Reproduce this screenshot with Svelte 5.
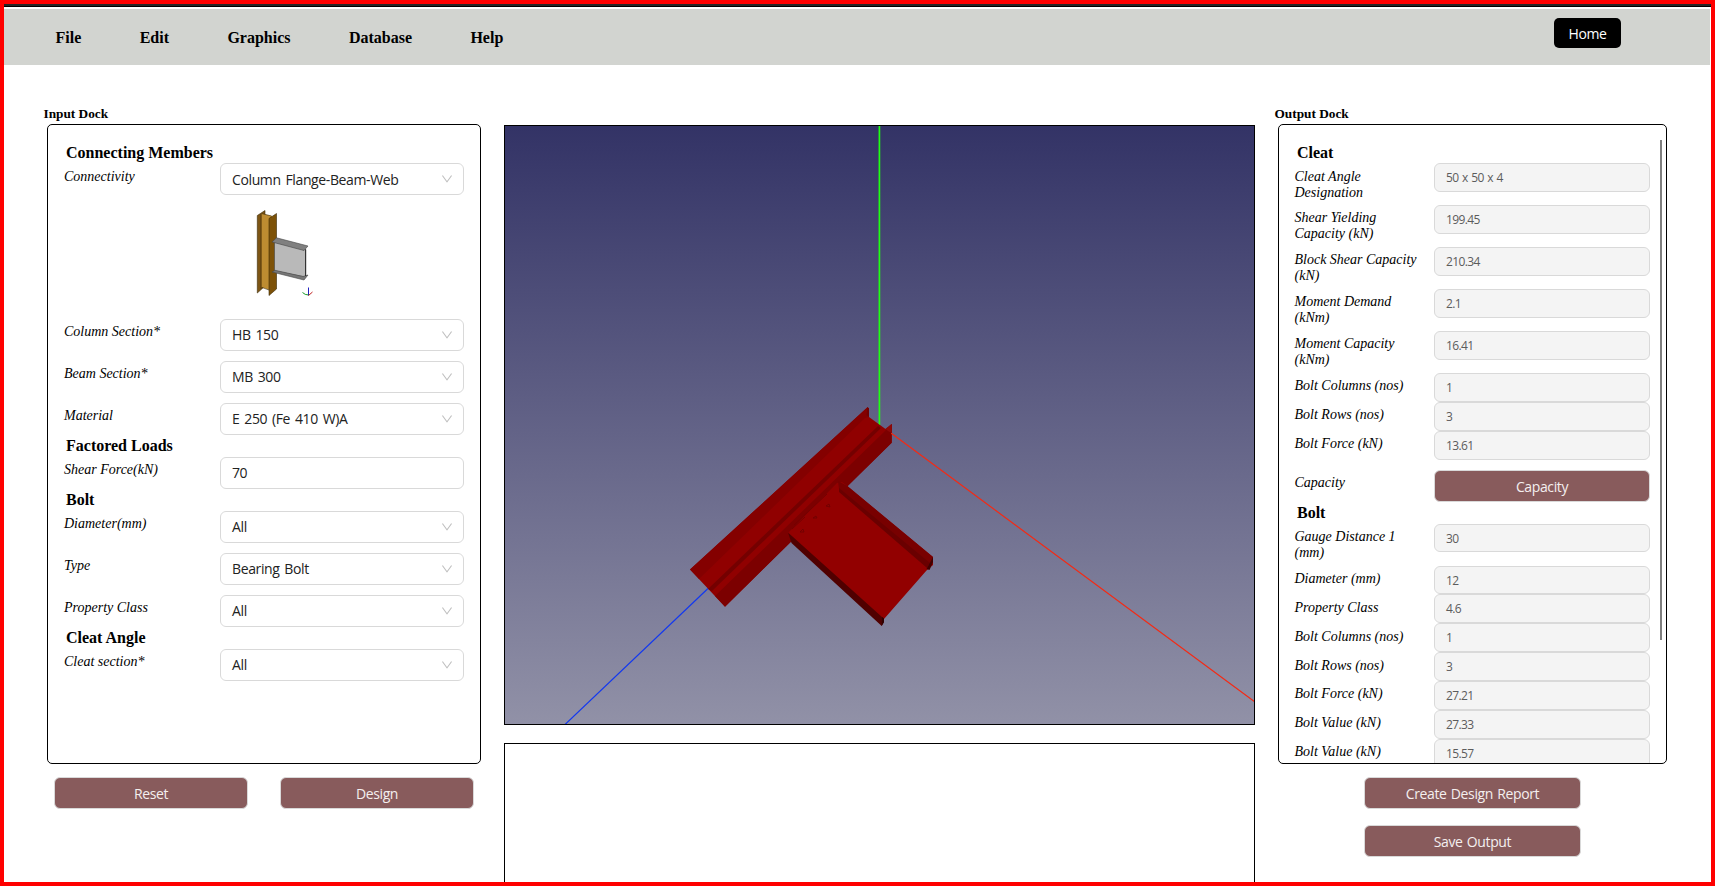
<script>
  const menu = ['File', 'Edit', 'Graphics', 'Database', 'Help'];

  const inputs = [
    { title: 'Connecting Members' },
    { label: 'Connectivity', value: 'Column Flange-Beam-Web', select: true, first: true },
    { picture: true },
    { label: 'Column Section*', value: 'HB 150', select: true },
    { label: 'Beam Section*', value: 'MB 300', select: true },
    { label: 'Material', value: 'E 250 (Fe 410 W)A', select: true },
    { title: 'Factored Loads' },
    { label: 'Shear Force(kN)', value: '70' },
    { title: 'Bolt' },
    { label: 'Diameter(mm)', value: 'All', select: true },
    { label: 'Type', value: 'Bearing Bolt', select: true },
    { label: 'Property Class', value: 'All', select: true },
    { title: 'Cleat Angle' },
    { label: 'Cleat section*', value: 'All', select: true }
  ];

  const outputs = [
    { title: 'Cleat' },
    { label: 'Cleat Angle Designation', value: '50 x 50 x 4', tall: true },
    { label: 'Shear Yielding Capacity (kN)', value: '199.45', tall: true },
    { label: 'Block Shear Capacity (kN)', value: '210.34', tall: true },
    { label: 'Moment Demand (kNm)', value: '2.1', tall: true },
    { label: 'Moment Capacity (kNm)', value: '16.41', tall: true },
    { label: 'Bolt Columns (nos)', value: '1' },
    { label: 'Bolt Rows (nos)', value: '3' },
    { label: 'Bolt Force (kN)', value: '13.61' },
    { label: 'Capacity', action: 'Capacity' },
    { title: 'Bolt' },
    { label: 'Gauge Distance 1 (mm)', value: '30', tall: true },
    { label: 'Diameter (mm)', value: '12' },
    { label: 'Property Class', value: '4.6' },
    { label: 'Bolt Columns (nos)', value: '1' },
    { label: 'Bolt Rows (nos)', value: '3' },
    { label: 'Bolt Force (kN)', value: '27.21' },
    { label: 'Bolt Value (kN)', value: '27.33' },
    { label: 'Bolt Value (kN)', value: '15.57' }
  ];
</script>

<div class="page">
  <div class="strip"></div>
  <header>
    <nav>
      {#each menu as item}<span>{item}</span>{/each}
    </nav>
    <button class="home">Home</button>
  </header>

  <main>
    <section class="left">
      <h2>Input Dock</h2>
      <div class="panel">
        {#each inputs as item}
          {#if item.title}
            <h3>{item.title}</h3>
          {:else if item.picture}
            <div class="picture">
              <svg width="90" height="114" viewBox="0 0 90 114">
                <g stroke="#3a2a08" stroke-width=".6" stroke-linejoin="round">
                  <path d="M17.3 20.5 25 15.500V91L17.300 98Z" fill="#7d5514" />
                  <path d="M21.500 18.500 32 21V96L21.500 92Z" fill="#bd8c31" stroke="none" />
                  <path d="M21.500 18.500 31.500 21" />
                  <path d="M21 19V94" />
                  <path d="M29 23.500 36.500 18.500V94L29 100.500Z" fill="#7d5208" />
                  <path d="M22 92.500 29 95" fill="none" />
                </g>
                <g stroke="#444" stroke-width=".6" stroke-linejoin="round">
                  <path d="M34.500 47 65.500 54V82L34.500 76Z" fill="#b9b9b9" />
                  <path d="M32 47 36.500 42.800 68 51 64 55.500Z" fill="#808080" />
                  <path d="M32 77 35 75.300 63 81.500 68 80 64 85Z" fill="#777" />
                  <path d="M65.700 54.500V81" stroke="#222" stroke-width="1" />
                </g>
                <path d="M68.500 100.500V92.500" stroke="#2020c0" />
                <path d="M68.500 100 Q65 100 62.500 97.500" stroke="#159a28" />
                <path d="M68.500 100.500 72.500 97" stroke="#c02020" />
              </svg>
            </div>
          {:else}
            <div class="row">
              <label>{item.label}</label>
              <div class="field" class:first={item.first}>
                <span>{item.value}</span>
                {#if item.select}
                  <svg width="12" height="12" viewBox="64 64 896 896" fill="#bfbfbf">
                    <path d="M884 256h-75c-5.100 0-9.900 2.500-12.900 6.600L512 654.200 227.900 262.600c-3-4.100-7.800-6.600-12.900-6.600h-75c-6.500 0-10.300 7.400-6.500 12.700l352.600 486.100c12.800 17.600 39 17.600 51.700 0l352.600-486.100c3.900-5.300.1-12.700-6.400-12.700z" />
                  </svg>
                {/if}
              </div>
            </div>
          {/if}
        {/each}
      </div>
      <div class="actions">
        <button>Reset</button>
        <button>Design</button>
      </div>
    </section>

    <section class="center">
      <div class="viewer">
        <svg width="749" height="598" viewBox="505 126 749 598">
          <path d="M879.400 126V425" stroke="#20ff12" stroke-width="1.700" />
          <path d="M708.500 588 564.500 725" stroke="#1238f0" stroke-width="1.200" />
          <path d="M690 569.500 867.500 407.300 869 408.500V417L885.500 429 891.700 424V442.700L725 606.700Z" fill="#900000" />
          <path d="M690 569.500 867.500 407.300 869 408.500V417L865 418 699 579Z" fill="#840000" />
          <path d="M715 596 884 432 891.700 424V442.700L725 606.700Z" fill="#7c0000" />
          <path d="M708 589 878 426 881 428 712 591Z" fill="#740000" />
          <path d="M867.500 407.300 869 408.500V417L866.500 415Z" fill="#720000" />
          <path d="M885.500 429 891.700 424V433L888 431Z" fill="#8e0909" />
          <path d="M880 425 1255 702" stroke="#f42a14" stroke-width="1.200" stroke-dasharray="0 14 500" />
          <path d="M788 533 837 483 842 482 847.300 486 933 557V565L926.500 570.500 884 619 880 622Z" fill="#920000" />
          <path d="M838 481 847.300 486 933 557 930 564 839 489Z" fill="#780000" />
          <path d="M839 488 930 563 927 568 839 492Z" fill="#6a0000" />
          <path d="M933 557V562L929.500 570 926.500 569Z" fill="#420000" />
          <path d="M788 532.500 882 617 884 618.500V622L881.700 626 791.500 543Z" fill="#500000" />
          <path d="M882 617 884 618.500V622L881.700 626Z" fill="#300000" />
          <path d="M794 525 827 494M792 529 805 517" stroke="#750000" stroke-width="1" />
          <path d="M826 506 829 504 830 507ZM813 518 816 516 817 518ZM800 532 803 529 804 532Z" fill="none" stroke="#6d0000" stroke-width=".8" />
        </svg>
      </div>
      <div class="log"></div>
    </section>

    <section class="right">
      <h2>Output Dock</h2>
      <div class="panel">
        {#each outputs as item}
          {#if item.title}
            <h3>{item.title}</h3>
          {:else}
            <div class="row" class:tall={item.tall} class:act={item.action}>
              <label>{item.label}</label>
              {#if item.action}
                <button>{item.action}</button>
              {:else}
                <div class="readout">{item.value}</div>
              {/if}
            </div>
          {/if}
        {/each}
        <div class="scrollbar"></div>
      </div>
      <div class="actions">
        <button>Create Design Report</button>
        <button>Save Output</button>
      </div>
    </section>
  </main>
</div>

<style>
  :global(body) { margin: 0; overflow: hidden; }
  .page {
    box-sizing: border-box;
    width: 1715px;
    height: 886px;
    border: 4px solid #f00;
    overflow: hidden;
    background: #fff;
    color: #000;
    font-family: "Liberation Serif", serif;
    display: flex;
    flex-direction: column;
  }
  .strip { flex: none; height: 2px; background: #262626; border-bottom: 1px solid #000; margin-bottom: 2px; }
  header {
    flex: none;
    display: flex;
    justify-content: space-between;
    height: 56px;
    margin-right: 1px;
    padding: 0 89px 0 51.500px;
    box-sizing: border-box;
    background: #d2d4d0;
  }
  nav { display: flex; gap: 58.400px; font-size: 16px; font-weight: bold; line-height: 57px; }
  button {
    box-sizing: border-box;
    height: 32px;
    border: 1px solid #d9d9d9;
    border-radius: 6px;
    padding: 1px 0 0;
    background: #885b5c;
    color: #f4efef;
    font: 14px/29px "Open Sans", sans-serif;
    letter-spacing: -.380px;
    word-spacing: 1px;
  }
  .home { width: 67px; height: 30px; margin-top: 9px; background: #000; border: 0; color: #fff; border-radius: 5px; }
  main { flex: 1; min-height: 0; display: grid; grid-template-columns: 434px 751px 389px; gap: 23px; padding: 41px 0 0 43px; }
  h2 { margin: 0 0 2px -3.500px; font-size: 13.300px; line-height: 16px; font-weight: bold; }
  .panel {
    position: relative;
    box-sizing: border-box;
    height: 640px;
    border: 1px solid #000;
    border-radius: 5px;
    padding: 16px 16px 0;
    overflow: hidden;
  }
  h3 { margin: 0; padding-left: 2px; font-size: 16px; line-height: 22px; height: 22px; }
  h3:first-child { line-height: 24px; }
  .row { display: grid; grid-template-columns: 156px 244px; height: 32px; margin-top: 10px; }
  h3 + .row { margin-top: 0; }
  label { font-size: 14px; font-style: italic; line-height: 16px; padding-top: 4.500px; }
  h3:first-child + .row label { padding-top: 5.500px; }
  .field {
    box-sizing: border-box;
    height: 32px;
    border: 1px solid #d9d9d9;
    border-radius: 6px;
    padding: 0 10px 0 11px;
    display: flex;
    align-items: center;
    justify-content: space-between;
    font: 14px/30px "Open Sans", sans-serif;
    letter-spacing: -.380px;
    word-spacing: 1.600px;
    color: #222;
  }
  .first span { padding-top: 1px; }
  .picture { height: 114px; padding-left: 176px; }
  .picture svg { display: block; fill: none; }
  .left .actions { display: flex; gap: 32px; padding: 13px 7px 0; }
  .left .actions button { flex: 1; }
  .center { padding-top: 19px; display: flex; flex-direction: column; gap: 18px; }
  .viewer { border: 1px solid #000; height: 598px; background: linear-gradient(#333366, #9191a7); }
  .viewer svg { display: block; }
  .log { height: 200px; flex: none; border: 1px solid #000; }
  .right .row { grid-template-columns: 139px 216px; height: 28.860px; margin-top: 0; }
  .right .row.tall { height: 32px; margin-bottom: 10px; }
  .right .row.act { height: 32px; margin-top: 10px; }
  .right .panel label { padding: 5.400px 12px 0 0; margin-left: -.500px; }
  .readout {
    box-sizing: border-box;
    height: 28.860px;
    border: 1px solid #d9d9d9;
    border-radius: 6px;
    padding-left: 11px;
    background: #f4f4f4;
    color: #5c5c5c;
    font: 12px/28px "Open Sans", sans-serif;
    letter-spacing: -.600px;
    word-spacing: 1px;
  }
  .scrollbar { position: absolute; top: 15px; right: 4px; width: 2px; height: 500px; background: #808080; }
  .right .actions { display: flex; flex-direction: column; gap: 16px; padding: 13px 0 0 86px; }
  .right .actions button { width: 217px; }
</style>
